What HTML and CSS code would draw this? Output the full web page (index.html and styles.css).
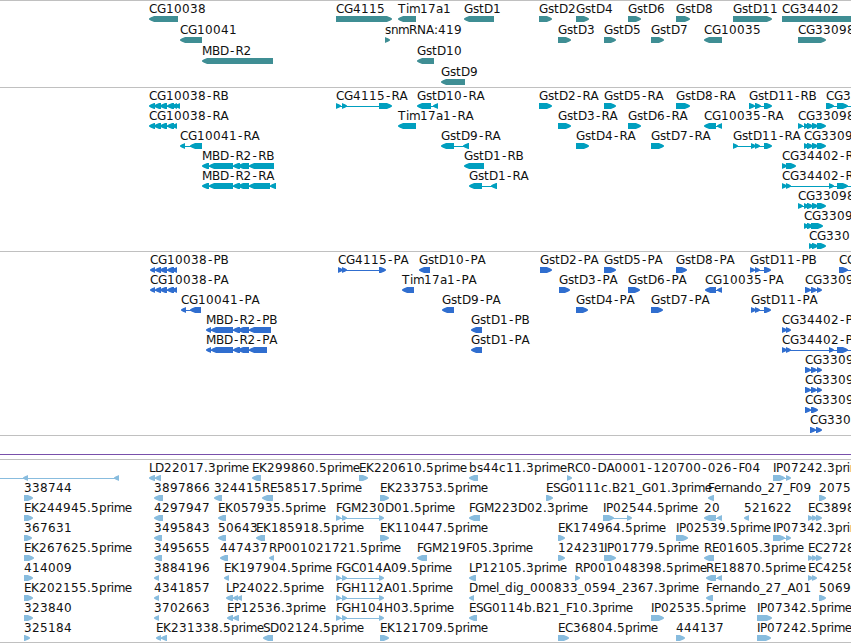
FILE: index.html
```
<!DOCTYPE html>
<html lang="en">
<head>
  <meta charset="UTF-8">
  <meta name="viewport" content="width=device-width, initial-scale=1.0">
  <title>Genome Browser</title>
  <link rel="stylesheet" href="styles.css">
</head>
<body>
  <div class="browser">
    <svg class="track genes" id="genes"></svg>
    <svg class="track transcripts" id="transcripts"></svg>
    <svg class="track proteins" id="proteins"></svg>
    <div class="track divider"><div class="divider-line"></div></div>
    <svg class="track ests" id="ests"></svg>
    <div class="track track-end"></div>
  </div>
  <script src="script.js"></script>
</body>
</html>
```
FILE: styles.css
```
body {
  margin: 0;
  padding: 0;
  background-color: white;
  overflow: hidden;
}
.browser {
  display: flex;
  flex-direction: column;
  width: 851px;
  height: 643px;
  overflow: hidden;
}
.track {
  display: block;
  box-sizing: border-box;
  flex: none;
  width: 100%;
  border-top: 1px solid #c0c0c0;
  overflow: hidden;
}
.genes {
  height: 87px;
  color: #3f8e94;
}
.transcripts {
  height: 164px;
  color: #009fbf;
}
.proteins {
  height: 184px;
  color: #306ecf;
}
.divider {
  height: 24px;
  padding-top: 18px;
}
.divider-line {
  height: 1px;
  background-color: #7950ab;
}
.ests {
  height: 183px;
  color: #88bcde;
}
.track-end {
  height: 1px;
}
.label {
  font-family: 'DejaVu Sans', sans-serif;
  font-size: 12px;
  fill: #111;
  white-space: pre;
}
.glyph {
  fill: currentColor;
}
```
FILE: script.js
```
// One string per row: "label dir start-end,start-end" with features split by |
const tracks = {
  genes: { pitch: 21, rows: [
    'CG10038 < 149-178|CG4115 > 336-392|Tim17a1 < 398-416|GstD1 < 464-494|GstD2 > 539-552|GstD4 > 576-589|GstD6 > 628-641|GstD8 > 676-690|GstD11 > 733-772|CG34402 > 782-870',
    'CG10041 < 180-202|snmRNA:419 > 385-390|GstD3 > 558-571|GstD5 > 604-616|GstD7 > 651-664|CG10035 < 704-722|CG33098 > 798-826',
    'MBD-R2 < 202-273|GstD10 < 417-434',
    'GstD9 < 441-465'
  ]},
  transcripts: { pitch: 20, rows: [
    'CG10038-RB < 149-155,154-161,160-167,167-174,172-177,175-180|CG4115-RA > 336-341,342-347,379-392|GstD10-RA < 417-431,433-438|GstD2-RA > 539-552|GstD5-RA > 604-616|GstD8-RA > 676-690|GstD11-RB > 749-755,755-761,764-772|CG3 > 826-834,837-848,870-880',
    'CG10038-RA < 149-155,154-161,160-167,167-174,172-177|Tim17a1-RA < 398-416|GstD3-RA > 558-571|GstD6-RA > 628-641|CG10035-RA < 704-716,717-722|CG33098 > 798-803,804-809,807-813,812-818,817-826',
    'CG10041-RA < 180-185,190-202|GstD9-RA < 441-454,463-469|GstD4-RA > 576-589|GstD7-RA > 651-664|GstD11-RA > 733-738,751-756,755-760,764-772|CG3309 > 804-809,807-813,812-818,817-826',
    'MBD-R2-RB < 202-209,209-233,233-240,238-249,249-274|GstD1-RB < 464-484|CG34402-R > 782-787,786-796',
    'MBD-R2-RA < 202-209,209-233,233-240,238-249,249-270,270-276|GstD1-RA < 469-482,491-497|CG34402-R > 782-787,786-791,829-834,837-848,870-880',
    'CG33098 > 798-803,804-809,807-813,812-818,817-826',
    'CG3309 > 804-809,807-813,811-823',
    'CG330 > 809-814,812-818,817-826'
  ]},
  proteins: { pitch: 20, rows: [
    'CG10038-PB < 150-155,155-161,160-167,167-174,172-177|CG4115-PA > 338-343,342-347,379-386|GstD10-PA < 419-430|GstD2-PA > 540-552|GstD5-PA > 604-616|GstD8-PA > 676-687|GstD11-PB > 750-755,755-760,764-771|CG > 839-848,870-880',
    'CG10038-PA < 150-155,155-161,160-167,167-174,172-177|Tim17a1-PA < 402-414|GstD3-PA > 559-570|GstD6-PA > 628-640|CG10035-PA < 705-716,717-722|CG3309 > 805-811,811-817,817-822',
    'CG10041-PA < 181-186,190-201|GstD9-PA < 442-454|GstD4-PA > 576-588|GstD7-PA > 651-663|GstD11-PA > 751-756,755-760,764-771',
    'MBD-R2-PB < 206-211,211-233,233-240,238-249,249-271|GstD1-PB < 471-482|CG34402-P > 782-787,786-791',
    'MBD-R2-PA < 206-211,211-233,233-240,238-249,249-267|GstD1-PA < 471-482|CG34402-P > 782-787,786-791,829-834,837-848,870-880',
    'CG3309 > 805-811,811-817,817-822',
    'CG3309 > 805-811,811-817,817-822',
    'CG3309 > 805-811,811-818',
    'CG330 > 810-816,816-822'
  ]},
  ests: { pitch: 20, rows: [
    ' < -20--10,23-28,114-119|LD22017.3prime < 149-155,155-161|EK299860.5prime < 252-261|EK220610.5prime > 359-368|bs44c11.3prime < 469-478|RC0-DA0001-120700-026-F04 > 567-572|IP07242.3prime > 773-785,786-791',
    '338744 > 24-33|3897866 < 154-163|324415 < 214-222|RE58517.5prime < 262-273|EK233753.5prime > 380-389|ESG0111c.B21_G01.3prime > 546-553|Fernando_27_F09 < 708-714|2075 > 819-826',
    'EK244945.5prime > 24-33|4297947 < 154-163|EK057935.5prime < 218-226|FGM230D01.5prime > 336-341,342-347,379-384|FGM223D02.3prime < 469-480|IP02544.5prime > 603-614,627-632|20 < 704-716,717-722|521622 < 744-749|EC3898 > 808-813,812-817,816-822',
    '367631 > 24-32|3495843 < 154-162|50643 < 218-226|EK185918.5prime < 256-265|EK110447.5prime > 380-389|EK174964.5prime > 558-565|IP02539.5prime > 676-688|IP07342.3prime > 773-785,786-791',
    'EK267625.5prime > 24-34|3495655 < 154-162|447437 < 220-228|RP001021721.5prime < 269-274|FGM219F05.3prime < 417-427|124231 > 558-565|IP01779.5prime > 604-616|RE01605.3prime < 704-714|EC2728 > 808-813,812-817,816-822',
    '414009 > 24-33|3884196 < 154-159|EK197904.5prime < 224-229|FGC014A09.5prime > 336-341,342-347,379-384|LP12105.3prime < 469-476|RP001048398.5prime > 575-580|RE18870.5prime < 706-716,717-722|EC4258 > 808-813,812-817',
    'EK202155.5prime > 24-33|4341857 < 154-159|LP24022.5prime < 226-233,233-238,237-242|FGH112A01.5prime > 336-341,342-347,379-384|Dmel_dig_000833_0594_2367.3prime < 469-474|Fernando_27_A01 < 706-713|5069 > 819-826',
    '323840 > 24-33|3702663 < 154-159|EP12536.3prime < 227-233,233-239|FGH104H03.5prime > 336-341,342-347,379-384|ESG0114b.B21_F10.3prime < 469-477|IP02535.5prime > 651-664|IP07342.5prime > 757-772',
    '325184 > 24-30|EK231338.5prime < 156-161,161-167|SD02124.5prime < 263-273|EK121709.5prime > 380-389|EC36804.5prime > 558-569|444137 > 676-685|IP07242.5prime > 757-771'
  ]}
};

const TIP = 5;

// label advance widths in px, anything not listed is 8
const ADVANCE = {
  G: 9, M: 10, D: 9, T: 8, E: 7, F: 6, L: 6, P: 7, S: 7, I: 3, N: 9, H: 9,
  s: 6, t: 5, i: 3, l: 3, m: 11, a: 7, e: 7, r: 4.4, n: 7, o: 7, c: 7, p: 7.4,
  '.': 4, ':': 4, '_': 6, '-': 6.6
};

function glyphPositions(label, start) {
  let x = start;
  return [...label].map(ch => {
    const pos = x;
    x += ADVANCE[ch] || 8;
    // hyphen sits in the middle of its wider cell
    return (ch === '-' ? pos + 1 : pos).toFixed(1);
  }).join(' ');
}

// arrow shaped box, pointing left or right
function arrow(start, end, dir, y) {
  const s = dir === '<' ? 1 : -1;
  const x = dir === '<' ? start : end;
  const back = dir === '<' ? end : start;
  const tip = Math.min(TIP, end - start);
  return `<path class="glyph" d="M${x} ${y + 2.6}L${x + s * 2} ${y + 1.3}L${x + s * (tip - 1)} ${y + 0.6}L${x + s * tip} ${y}H${back}V${y + 6}H${x + s * tip}L${x + s * (tip - 1)} ${y + 5.4}L${x + s * 2} ${y + 4.7}L${x} ${y + 3.4}Z"/>`;
}

function drawTrack(id) {
  const { pitch, rows } = tracks[id];
  let out = '';
  rows.forEach((row, i) => {
    const top = i * pitch;
    row.split('|').forEach(item => {
      const [label, dir, spans] = item.split(' ').slice(-3);
      const segs = spans.split(',').map(s => s.match(/^(-?\d+)-(-?\d+)$/).slice(1).map(Number));
      const first = segs[0][0];
      const last = segs[segs.length - 1][1];
      if (segs.length > 1) {
        out += `<rect class="glyph" x="${first + 1}" y="${top + 18}" width="${last - first - 2}" height="1"/>`;
      }
      segs.forEach(([a, b]) => { out += arrow(a, b, dir, top + 15); });
      if (label) {
        out += `<text class="label" x="${glyphPositions(label, first)}" y="${top + 12}">${label}</text>`;
      }
    });
  });
  document.getElementById(id).innerHTML = out;
}

Object.keys(tracks).forEach(drawTrack);
```
